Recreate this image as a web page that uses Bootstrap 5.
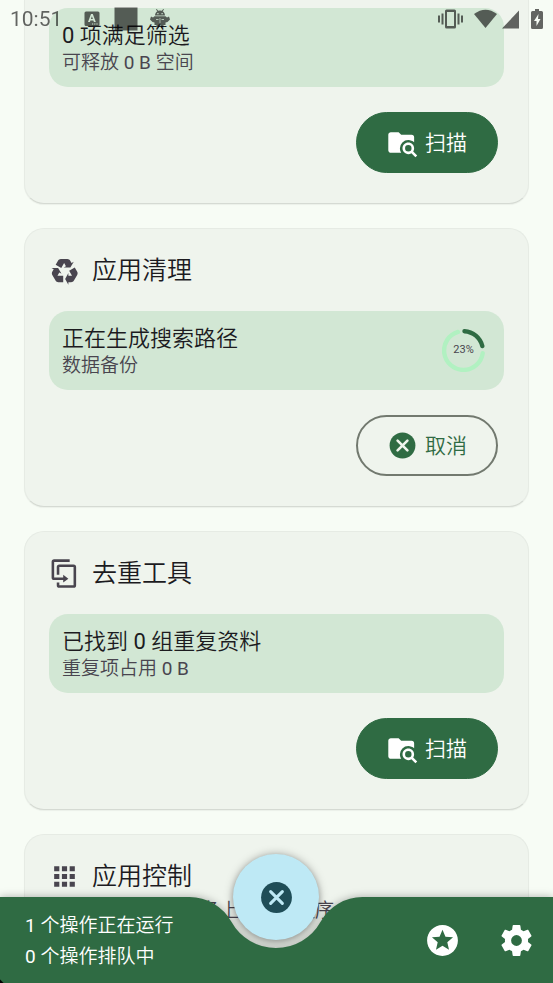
<!DOCTYPE html>
<html lang="zh-CN">
<head>
<meta charset="utf-8">
<meta name="viewport" content="width=device-width, initial-scale=1">
<title>应用清理</title>
<link href="https://cdn.jsdelivr.net/npm/bootstrap@5.3.0/dist/css/bootstrap.min.css" rel="stylesheet">
<style>
  :root { --green: #2f6b43; --ink: #1c1b1f; --muted: #49454f; }
  body { background: #f7fcf5; color: var(--ink); font-family: Roboto, "Noto Sans CJK SC DemiLight", "Noto Sans CJK SC", sans-serif; }
  svg { display: block; flex: none; fill: currentColor; }

  .status-bar { color: rgba(0, 0, 0, .6); height: 37px; padding: 0 10px; font-size: 21px; line-height: 37px; }
  .clock { padding-top: 2px; }
  .status-notes { gap: 10px; margin-left: 18px; }
  .gap-wifi { margin-left: 11px; }
  .gap-signal { margin-left: 5px; }
  .gap-battery { margin-left: 12px; }

  .tool-list { gap: 24px; padding: 0 24px; }
  .tool-card { background: #eff4ed; border: 1px solid #e6ebe4; border-bottom-color: #d5dad3; border-radius: 20px; padding: 24px 24px 30px; box-shadow: 0 1px 1px rgba(0, 0, 0, .05); }
  .tool-card-cut { border-top: 0; border-top-left-radius: 0; border-top-right-radius: 0; padding-top: 8px; }
  .tool-head { gap: 12px; height: 34px; margin-bottom: 24px; color: var(--muted); }
  .tool-head h2 { font-size: 25px; line-height: 34px; font-weight: 400; padding-top: 2px; color: var(--ink); }
  .result { background: #d2e7d4; border-radius: 19px; min-height: 79px; padding: 0 19px 0 13px; margin-bottom: 25px; }
  .result-text { padding-top: 3px; }
  .result-title { font-size: 22px; line-height: 27px; }
  .note { font-size: 19px; line-height: 27px; color: var(--muted); }
  .ring-box { width: 43px; height: 43px; }
  .ring-label { font-size: 11px; color: var(--muted); }
  .pill { display: inline-flex; align-items: center; gap: 7px; height: 61px; padding: 0 30px; margin-right: 6px; border-radius: 31px; font-size: 21px; line-height: 32px; }
  .pill-fill, .pill-fill:hover { background: var(--green); border-color: var(--green); color: #fff; }
  .pill-line, .pill-line:hover { background: transparent; border: 2px solid #72796f; color: var(--green); padding: 0 29px; }

  .bottom-bar { filter: drop-shadow(0 0 4px rgba(0, 0, 0, .3)); color: #fff; }
  .bar-side { flex: 1 1 0; min-width: 0; height: 86px; padding: 0 18px; background: var(--green); }
  .bar-left { font-size: 19px; line-height: 31px; background: linear-gradient(45deg, #000 2px, var(--green) 3px); }
  .bar-text { padding: 13px 0 0 7px; }
  .bar-right { gap: 37px; }
  .bar-notch { color: var(--green); width: 181px; height: 86px; }
  .icon-btn { color: #fff; background: none; border: 0; padding: 0; }
  .fab { top: -43px; left: 47px; width: 86px; height: 86px; background: #bee9f5; color: #1f4d57; box-shadow: 0 3px 6px rgba(0, 0, 0, .2); padding: 0; border: 0; }
</style>
<script src="https://cdn.jsdelivr.net/npm/bootstrap@5.3.0/dist/js/bootstrap.bundle.min.js"></script>
</head>
<body class="vh-100 overflow-hidden">

<svg width="0" height="0" class="position-absolute" aria-hidden="true">
  <symbol id="folder-search" viewBox="0 0 24 24"><path d="M16.5,12C19,12 21,14 21,16.5C21,17.38 20.75,18.21 20.31,18.9L23.39,22L22,23.39L18.88,20.32C18.19,20.75 17.37,21 16.5,21C14,21 12,19 12,16.5C12,14 14,12 16.5,12M16.5,14A2.5,2.5 0 0,0 14,16.5A2.5,2.5 0 0,0 16.5,19A2.5,2.5 0 0,0 19,16.5A2.5,2.5 0 0,0 16.5,14M9,4L11,6H19A2,2 0 0,1 21,8V11.81C19.83,10.69 18.25,10 16.5,10A6.5,6.5 0 0,0 10,16.5C10,17.79 10.37,19 11,20H3C1.89,20 1,19.1 1,18V6C1,4.89 1.89,4 3,4H9Z"/></symbol>
</svg>

<header class="status-bar fixed-top d-flex align-items-center">
  <span class="clock">10:51</span>
  <div class="status-notes d-flex align-items-center">
    <svg width="24" height="24" viewBox="0 0 24 24"><path fill-rule="evenodd" d="M6 4.500H18Q19.500 4.500 19.500 6V17.500Q19.500 19 18 19H6Q4.500 19 4.500 17.500V6Q4.500 4.500 6 4.500ZM11 7L8 15H9.900L10.400 13.400H13.400L13.900 15H15.800L12.800 7ZM11.900 9.200L12.900 12H10.900ZM12 16.500V17.500H13.200V16.500ZM14.200 16.500V17.500H15.400V16.500ZM16.400 16.500V17.500H17.600V16.500Z"/></svg>
    <svg width="24" height="24" viewBox="0 0 24 24"><path d="M.5 .5H23.500V23.500H.5Z"/></svg>
    <svg width="24" height="24" viewBox="0 0 24 24"><path fill-rule="evenodd" d="M7 8.500C7 6.500 8 5 9.300 4.200L8 2.500L8.700 2L10.200 3.800Q12 3.200 13.800 3.800L15.300 2L16 2.500L14.700 4.200C16 5 17 6.500 17 8.500ZM9.300 6V7.200H10.500V6ZM13.500 6V7.200H14.700V6ZM6.500 9.300H17.500L19 10.500L21 9.500L22 12.500L19.500 15L17.500 15.500V18H15.500V20.500H13V18.500H11V20.500H8.500V18H6.500V15.500L4.500 15L2 12.500L3 9.500L5 10.500ZM11.700 11V16H12.300V11ZM8 12V12.800H10.500V12ZM13.500 12V12.800H16V12Z"/></svg>
  </div>
  <svg class="ms-auto" width="25" height="20" viewBox="0 0 25 20"><path fill-rule="evenodd" d="M0 6.500H2V13.500H0ZM3.500 4.500H5.500V15.500H3.500ZM19.500 4.500H21.500V15.500H19.500ZM23 6.500H25V13.500H23ZM8.500 .5H16.500Q18 .5 18 2V18Q18 19.500 16.500 19.500H8.500Q7 19.500 7 18V2Q7 .5 8.500 .5ZM9 3V17H16V3Z"/></svg>
  <svg class="gap-wifi" width="23" height="20" viewBox="0 0 23 20"><path d="M0 5Q11.500-3.500 23 5L11.500 19Z"/></svg>
  <svg class="gap-signal" width="17" height="20" viewBox="0 0 17 20"><path d="M17 1.500V19.500H0Z"/></svg>
  <svg class="gap-battery" width="12" height="20" viewBox="0 0 12 20"><path fill-rule="evenodd" d="M4 0H8V2H10.500Q12 2 12 3.500V18.500Q12 20 10.500 20H1.500Q0 20 0 18.500V3.500Q0 2 1.500 2H4ZM7.500 5L3 12H5.500V17L9.500 10H7Z"/></svg>
</header>

<main class="tool-list d-flex flex-column">
  <section class="tool-card tool-card-cut">
    <div class="result d-flex align-items-center">
      <div class="result-text">
        <div class="result-title">0 项满足筛选</div>
        <div class="note">可释放 0 B 空间</div>
      </div>
    </div>
    <div class="d-flex justify-content-end">
      <button type="button" class="btn pill pill-fill"><svg width="31" height="31" aria-hidden="true"><use href="#folder-search"/></svg>扫描</button>
    </div>
  </section>

  <section class="tool-card">
    <div class="tool-head d-flex align-items-center">
      <svg width="31" height="31" viewBox="0 0 24 24"><path d="M21.82,15.42L19.32,19.75C18.83,20.61 17.92,21.06 17,21H15V23L12.5,18.5L15,14V16H17.82L15.6,12.15L19.93,9.65L21.73,12.77C22.25,13.54 22.32,14.57 21.82,15.42M9.21,3.06H14.21C15.19,3.06 16.04,3.63 16.45,4.45L17.45,6.19L19.18,5.19L16.54,9.6L11.39,9.69L13.12,8.69L11.71,6.24L9.5,10.09L5.16,7.59L6.96,4.47C7.37,3.64 8.22,3.06 9.21,3.06M5.05,19.76L2.55,15.43C2.06,14.58 2.13,13.56 2.64,12.79L3.64,11.06L1.91,10.06L7.05,10.14L9.7,14.56L7.97,13.56L6.56,16H11V21H7.4C6.47,21.07 5.55,20.61 5.05,19.76Z"/></svg>
      <h2 class="m-0">应用清理</h2>
    </div>
    <div class="result d-flex align-items-center justify-content-between">
      <div class="result-text">
        <div class="result-title">正在生成搜索路径</div>
        <div class="note">数据备份</div>
      </div>
      <div class="ring-box position-relative d-flex align-items-center justify-content-center" role="progressbar" aria-label="进度" aria-valuenow="23" aria-valuemin="0" aria-valuemax="100">
        <svg class="position-absolute top-0 start-0" width="43" height="43" viewBox="-21.5 -21.5 43 43" fill="none" stroke-width="4.400" stroke-linecap="round">
          <path fill="none" stroke="#b1f1c1" d="M19.200 2.700A19.400 19.400 0 1 1 -5.500 -18.600"/>
          <path fill="none" stroke="#2f6b43" d="M1 -19.300A19.400 19.400 0 0 1 18.800 -4.500"/>
        </svg>
        <span class="ring-label">23%</span>
      </div>
    </div>
    <div class="d-flex justify-content-end">
      <button type="button" class="btn pill pill-line"><svg width="31" height="31" viewBox="0 0 24 24"><circle cx="12" cy="12" r="10"/><path d="M8.200 8.200L15.800 15.800M15.800 8.200L8.200 15.800" stroke="#eff4ed" stroke-width="2" stroke-linecap="round"/></svg>取消</button>
    </div>
  </section>

  <section class="tool-card">
    <div class="tool-head d-flex align-items-center">
      <svg width="31" height="31" viewBox="0 0 24 24"><path d="M11,17H4A2,2 0 0,1 2,15V3A2,2 0 0,1 4,1H16V3H4V15H11V13L15,16L11,19V17M19,21V7H8V13H6V7A2,2 0 0,1 8,5H19A2,2 0 0,1 21,7V21A2,2 0 0,1 19,23H8A2,2 0 0,1 6,21V19H8V21H19Z"/></svg>
      <h2 class="m-0">去重工具</h2>
    </div>
    <div class="result d-flex align-items-center">
      <div class="result-text">
        <div class="result-title">已找到 0 组重复资料</div>
        <div class="note">重复项占用 0 B</div>
      </div>
    </div>
    <div class="d-flex justify-content-end">
      <button type="button" class="btn pill pill-fill"><svg width="31" height="31" aria-hidden="true"><use href="#folder-search"/></svg>扫描</button>
    </div>
  </section>

  <section class="tool-card">
    <div class="tool-head d-flex align-items-center mb-1">
      <svg width="31" height="31" viewBox="0 0 24 24"><path d="M16,20H20V16H16M16,14H20V10H16M10,8H14V4H10M16,8H20V4H16M10,14H14V10H10M4,14H8V10H4M4,20H8V16H4M10,20H14V16H10M4,8H8V4H4V8Z"/></svg>
      <h2 class="m-0">应用控制</h2>
    </div>
    <p class="note mb-5">查看并管理您的设备上的应用程序</p>
  </section>
</main>

<nav class="bottom-bar fixed-bottom d-flex">
  <div class="bar-side bar-left text-nowrap">
    <div class="bar-text">
      <div>1 个操作正在运行</div>
      <div>0 个操作排队中</div>
    </div>
  </div>
  <div class="bar-notch position-relative">
    <svg width="181" height="86" viewBox="0 0 181 86"><path d="M-1 0H3.500A48 48 0 0 1 45.400 24.700A51 51 0 0 0 134.600 24.700A48 48 0 0 1 176.500 0H182V86H-1Z"/></svg>
    <button type="button" class="fab position-absolute rounded-circle d-flex align-items-center justify-content-center" aria-label="取消全部">
      <svg width="37" height="37" viewBox="0 0 24 24"><circle cx="12" cy="12" r="10"/><path d="M8.200 8.200L15.800 15.800M15.800 8.200L8.200 15.800" stroke="#bee9f5" stroke-width="2" stroke-linecap="round"/></svg>
    </button>
  </div>
  <div class="bar-side bar-right d-flex align-items-center justify-content-end">
    <button type="button" class="icon-btn" aria-label="升级"><svg width="37" height="37" viewBox="0 0 24 24"><path d="M11.990 2C6.470 2 2 6.480 2 12s4.470 10 9.990 10C17.520 22 22 17.520 22 12S17.520 2 11.990 2zm4.240 16L12 15.450 7.770 18l1.120-4.810-3.730-3.230 4.920-.42L12 5l1.920 4.530 4.920.42-3.730 3.230L16.230 18z"/></svg></button>
    <button type="button" class="icon-btn" aria-label="设置"><svg width="37" height="37" viewBox="0 0 24 24"><path d="M12,15.5A3.5,3.5 0 0,1 8.5,12A3.5,3.5 0 0,1 12,8.5A3.5,3.5 0 0,1 15.5,12A3.5,3.5 0 0,1 12,15.5M19.43,12.97C19.47,12.65 19.5,12.33 19.5,12C19.5,11.67 19.47,11.34 19.43,11L21.54,9.37C21.73,9.22 21.78,8.95 21.66,8.73L19.66,5.27C19.54,5.05 19.27,4.96 19.05,5.05L16.56,6.05C16.04,5.66 15.5,5.32 14.87,5.07L14.5,2.42C14.46,2.18 14.25,2 14,2H10C9.75,2 9.54,2.18 9.5,2.42L9.13,5.07C8.5,5.32 7.96,5.66 7.44,6.05L4.95,5.05C4.73,4.96 4.46,5.05 4.34,5.27L2.34,8.73C2.21,8.95 2.27,9.22 2.46,9.37L4.57,11C4.53,11.34 4.5,11.67 4.5,12C4.5,12.33 4.53,12.65 4.57,12.97L2.46,14.63C2.27,14.78 2.21,15.05 2.34,15.27L4.34,18.73C4.46,18.95 4.73,19.03 4.95,18.95L7.44,17.94C7.96,18.34 8.5,18.68 9.13,18.93L9.5,21.58C9.54,21.82 9.75,22 10,22H14C14.25,22 14.46,21.82 14.5,21.58L14.87,18.93C15.5,18.67 16.04,18.34 16.56,17.94L19.05,18.95C19.27,19.03 19.54,18.95 19.66,18.73L21.66,15.27C21.78,15.05 21.73,14.78 21.54,14.63L19.43,12.97Z"/></svg></button>
  </div>
</nav>
</body>
</html>
